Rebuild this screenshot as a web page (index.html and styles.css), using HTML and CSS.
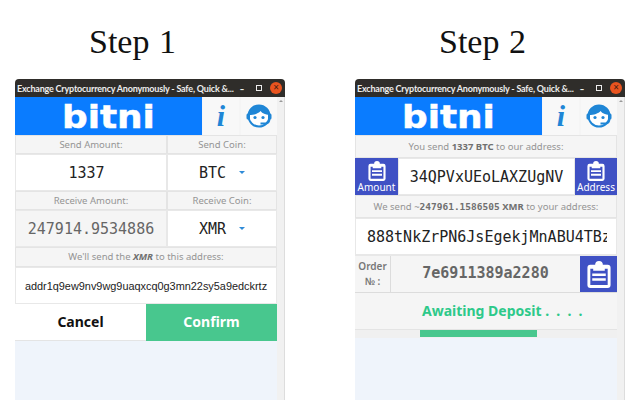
FILE: index.html
```html
<!DOCTYPE html>
<html lang="en">
<head>
    <meta charset="UTF-8">
    <title>Bitni steps</title>
    <link rel="stylesheet" href="styles.css">
</head>
<body>
    <svg class="defs" width="0" height="0">
        <symbol id="clip" viewBox="0 0 24 28">
            <path fill="#fff" fill-rule="evenodd" d="M3 4h5a4 4 0 0 1 8 0h5a3 3 0 0 1 3 3v18a3 3 0 0 1-3 3H3a3 3 0 0 1-3-3V7a3 3 0 0 1 3-3zM3 8v17h18V8h-3v2H6V8zM5 13h14v2.500H5zM5 18h14v2.500H5z"/>
        </symbol>
        <symbol id="agent" viewBox="0 0 26 24">
            <circle cx="13" cy="12" r="10.500" fill="#fff" stroke="#1f86d6" stroke-width="2"/>
            <path fill="#1f86d6" d="M3 11C3 5 7.500 1.500 13 1.500S23 5 23 11c-3.500-.3-6.500-1.500-8.500-4C12.500 9.500 8 11 3 11z"/>
            <rect x="0.500" y="9.500" width="3.500" height="6" rx="1.500" fill="#1f86d6"/>
            <rect x="22" y="9.500" width="3.500" height="6" rx="1.500" fill="#1f86d6"/>
            <circle cx="9" cy="13.500" r="1.600" fill="#1f86d6"/>
            <circle cx="17" cy="13.500" r="1.600" fill="#1f86d6"/>
            <path fill="none" stroke="#1f86d6" stroke-width="1.800" d="M23.500 15c0 3-1.500 4.500-4 4.500h-5"/>
        </symbol>
    </svg>

    <div class="desktop">
        <section class="step">
            <h1 class="first">Step 1</h1>
            <div class="window">
                <div class="titlebar">
                    <span class="title">Exchange Cryptocurrency Anonymously - Safe, Quick &amp;...</span>
                    <span class="win-btn">–</span>
                    <span class="win-btn square"></span>
                    <span class="win-close">×</span>
                </div>
                <div class="client">
                    <div class="app">
                        <div class="top">
                            <div class="logo"><span>bitni</span></div>
                            <div class="top-btn info">i</div>
                            <div class="top-btn"><svg class="agent"><use href="#agent"/></svg></div>
                        </div>
                        <div class="two">
                            <div class="label">Send Amount:</div>
                            <div class="label">Send Coin:</div>
                        </div>
                        <div class="two">
                            <div class="cell mono send-value">1337</div>
                            <div class="cell mono">BTC<i class="caret"></i></div>
                        </div>
                        <div class="two">
                            <div class="label">Receive Amount:</div>
                            <div class="label">Receive Coin:</div>
                        </div>
                        <div class="two">
                            <div class="cell mono muted">247914.9534886</div>
                            <div class="cell mono">XMR<i class="caret"></i></div>
                        </div>
                        <div class="label wide">We'll send the <b><i>XMR</i></b> to this address:</div>
                        <div class="cell address">addr1q9ew9nv9wg9uaqxcq0g3mn22sy5a9edckrtz</div>
                        <div class="actions">
                            <div class="cancel">Cancel</div>
                            <div class="confirm">Confirm</div>
                        </div>
                    </div>
                    <div class="scrollbar"><i></i></div>
                </div>
            </div>
        </section>

        <section class="step">
            <h1 class="second">Step 2</h1>
            <div class="window">
                <div class="titlebar">
                    <span class="title">Exchange Cryptocurrency Anonymously - Safe, Quick &amp;...</span>
                    <span class="win-btn">–</span>
                    <span class="win-btn square"></span>
                    <span class="win-close">×</span>
                </div>
                <div class="client">
                    <div class="app">
                        <div class="top">
                            <div class="logo"><span>bitni</span></div>
                            <div class="top-btn info">i</div>
                            <div class="top-btn"><svg class="agent"><use href="#agent"/></svg></div>
                        </div>
                        <div class="label tall">You send <b>1337 BTC</b> to our address:</div>
                        <div class="pay-row">
                            <div class="copy amount"><svg class="clip"><use href="#clip"/></svg>Amount</div>
                            <div class="cell mono grow">34QPVxUEoLAXZUgNV</div>
                            <div class="copy address-btn"><svg class="clip"><use href="#clip"/></svg>Address</div>
                        </div>
                        <div class="label tall">We send ~<b class="mono-b">247961.1586505</b> <b>XMR</b> to your address:</div>
                        <div class="cell mono long"><span>888tNkZrPN6JsEgekjMnABU4TBz</span></div>
                        <div class="order-row">
                            <div class="order-label">Order<br>№ :</div>
                            <div class="order-id">7e6911389a2280</div>
                            <div class="copy order-copy"><svg class="clip big"><use href="#clip"/></svg></div>
                        </div>
                        <div class="status">Awaiting Deposit <span class="dots">. . . .</span></div>
                        <div class="progress"><i></i></div>
                    </div>
                    <div class="scrollbar"><i></i></div>
                </div>
            </div>
        </section>
    </div>
</body>
</html>
```

FILE: styles.css
```css
* {
    margin: 0;
    padding: 0;
    box-sizing: border-box;
}

body {
    background: #fff;
    font-family: 'Noto Sans', sans-serif;
    overflow: hidden;
    width: 640px;
    height: 400px;
}

.defs {
    position: absolute;
}

.desktop {
    display: flex;
    gap: 70px;
    padding-left: 15px;
}

.step {
    width: 270px;
    height: 400px;
    display: flex;
    flex-direction: column;
}

h1 {
    height: 79px;
    padding-top: 22px;
    font-family: 'Liberation Serif', serif;
    font-weight: normal;
    font-size: 34px;
    line-height: 40px;
    word-spacing: 1px;
    color: #111;
}

h1.first {
    padding-left: 74px;
}

h1.second {
    padding-left: 84px;
}

.window {
    flex: 1;
    display: flex;
    flex-direction: column;
    min-height: 0;
}

.titlebar {
    height: 18px;
    display: flex;
    align-items: center;
    background: #2f2d2a;
    border-radius: 4px 4px 0 0;
    color: #eee;
    padding-left: 2px;
}

.title {
    font-family: 'Lato', sans-serif;
    font-weight: bold;
    font-size: 9px;
    letter-spacing: -0.200px;
    white-space: nowrap;
    width: 220px;
}

.win-btn {
    width: 10px;
    text-align: center;
    font-size: 8px;
    font-weight: bold;
}

.win-btn.square {
    width: 6px;
    height: 6px;
    border: 1.500px solid #eee;
    margin-left: 9px;
}

.win-close {
    width: 12px;
    height: 12px;
    margin-left: 8px;
    border-radius: 50%;
    background: #e9541f;
    color: #4a2113;
    font-size: 10px;
    line-height: 11px;
    text-align: center;
}

.client {
    flex: 1;
    display: flex;
    min-height: 0;
}

.app {
    width: 262px;
    background: #eff4fb;
    display: flex;
    flex-direction: column;
}

.scrollbar {
    width: 8px;
    background: #f1f1f1;
    border-right: 1px solid #ddd;
    padding: 3px 0 0 2px;
}

.scrollbar i {
    display: block;
    width: 0;
    height: 0;
    border-left: 2px solid transparent;
    border-right: 2px solid transparent;
    border-bottom: 2px solid #999;
}

.top {
    height: 38px;
    display: flex;
    background: #f5f5f5;
}

.logo {
    width: 187px;
    background: #0a7cff;
    color: #fff;
    display: flex;
    align-items: center;
    justify-content: center;
    overflow: hidden;
}

.logo span {
    font-family: 'DejaVu Sans', sans-serif;
    font-weight: bold;
    font-size: 32px;
    line-height: 38px;
    display: block;
    transform: scaleX(1.120);
    -webkit-text-stroke: 0.500px #fff;
    margin-top: 1px;
}

.top-btn {
    width: 36px;
    margin-left: 1px;
    background: #f8f8f8;
    display: flex;
    align-items: center;
    justify-content: center;
}

.top-btn:last-child {
    margin-left: 2px;
}

.info {
    font-family: 'Liberation Serif', serif;
    font-style: italic;
    font-weight: bold;
    font-size: 30px;
    color: #1f86d6;
}

.agent {
    width: 26px;
    height: 24px;
}

.two {
    display: grid;
    grid-template-columns: 152px 110px;
}

.label {
    height: 19px;
    background: #f5f5f5;
    border: 1px solid #e4e4e4;
    color: #949494;
    font-size: 9.500px;
    line-height: 17px;
    text-align: center;
    white-space: nowrap;
}

.label b {
    color: #707070;
}

.wide {
    height: 20px;
}

.tall {
    height: 23px;
    line-height: 21px;
}

.mono-b {
    font-family: 'DejaVu Sans Mono', monospace;
}

.cell {
    height: 37px;
    background: #fff;
    border: 1px solid #e8e8e8;
    display: flex;
    align-items: center;
    justify-content: center;
    color: #222;
    white-space: nowrap;
}

.mono {
    font-family: 'DejaVu Sans Mono', monospace;
    font-size: 15px;
}

.send-value {
    padding-right: 9px;
}

.muted {
    background: #f5f5f5;
    color: #666;
}

.caret {
    width: 0;
    height: 0;
    border-left: 3px solid transparent;
    border-right: 3px solid transparent;
    border-top: 3px solid #2f8bd8;
    margin-left: 13px;
}

.address {
    font-family: 'Liberation Sans', sans-serif;
    font-size: 10.900px;
    color: #222;
}

.actions {
    display: flex;
    height: 37px;
    font-weight: bold;
    font-size: 14px;
}

.cancel {
    width: 131px;
    background: #fff;
    color: #111;
    line-height: 36px;
    text-align: center;
    border-bottom: 1px solid #e4e4e4;
}

.confirm {
    width: 131px;
    background: #48c78e;
    color: #fff;
    line-height: 36px;
    text-align: center;
}

.pay-row {
    height: 37px;
    display: flex;
}

.grow {
    flex: 1;
}

.copy {
    background: #3f51c4;
    color: #fff;
    font-size: 10px;
    line-height: 11px;
    display: flex;
    flex-direction: column;
    align-items: center;
    justify-content: center;
}

.amount {
    width: 43px;
}

.address-btn {
    width: 42px;
}

.clip {
    width: 18px;
    height: 20px;
    margin-bottom: 1px;
}

.clip.big {
    width: 24px;
    height: 27px;
    margin: 0;
}

.long {
    justify-content: flex-start;
    padding-left: 11px;
}

.long span {
    display: block;
    width: 240px;
    overflow: hidden;
}

.order-row {
    height: 38px;
    display: flex;
    background: #f5f5f5;
    border-top: 1px solid #e8e8e8;
    border-bottom: 1px solid #dcdcdc;
}

.order-label {
    width: 36px;
    border-right: 1px solid #dcdcdc;
    color: #777;
    font-weight: 600;
    font-size: 10px;
    line-height: 15px;
    text-align: center;
    padding-top: 3px;
}

.order-id {
    flex: 1;
    font-family: 'DejaVu Sans Mono', monospace;
    font-weight: bold;
    font-size: 15px;
    color: #666;
    text-align: center;
    line-height: 35px;
}

.order-copy {
    width: 37px;
}

.status {
    height: 37px;
    background: #f5f5f5;
    border-bottom: 1px solid #e4e4e4;
    color: #2dc98a;
    font-weight: bold;
    font-size: 14px;
    line-height: 36px;
    padding-left: 67px;
}

.dots {
    word-spacing: 3.500px;
}

.progress {
    height: 8px;
    background: #f0f0f0;
    padding-left: 65px;
}

.progress i {
    display: block;
    width: 117px;
    height: 7px;
    background: #48c78e;
}
```
